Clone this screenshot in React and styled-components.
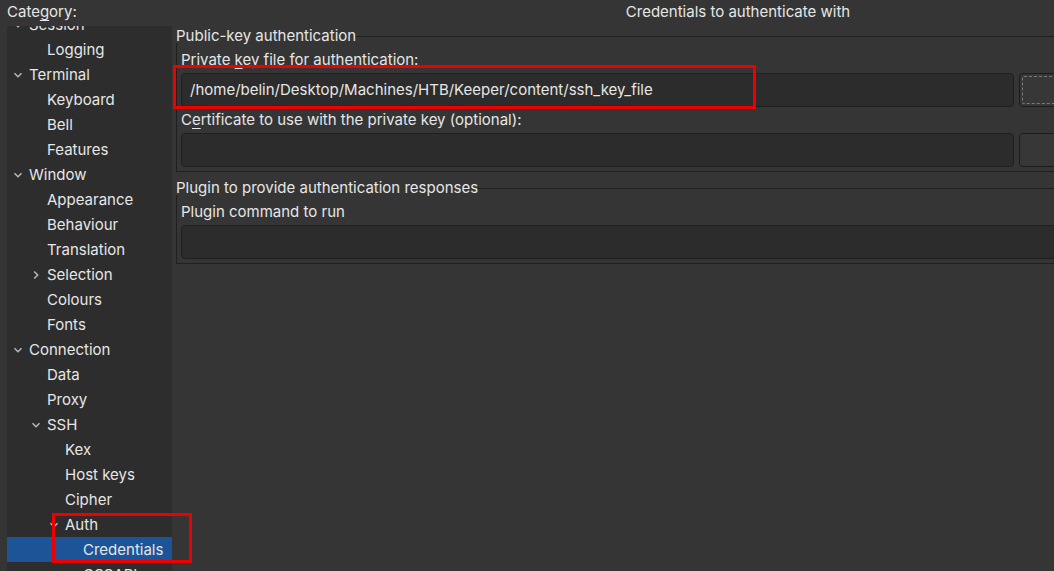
import React from 'react'
import styled, {createGlobalStyle} from 'styled-components'

const GlobalStyle = createGlobalStyle`
  html, body {
    margin: 0;
    padding: 0;
    background: #353535;
  }
  body {
    font-family: Inter, "Noto Sans", sans-serif;
    font-size: 15px;
    color: #e6e6e6;
  }
`

const tree = [
  {label: 'Session', level: 0, arrow: 'down'},
  {label: 'Logging', level: 1},
  {label: 'Terminal', level: 0, arrow: 'down'},
  {label: 'Keyboard', level: 1},
  {label: 'Bell', level: 1},
  {label: 'Features', level: 1},
  {label: 'Window', level: 0, arrow: 'down'},
  {label: 'Appearance', level: 1},
  {label: 'Behaviour', level: 1},
  {label: 'Translation', level: 1},
  {label: 'Selection', level: 1, arrow: 'right'},
  {label: 'Colours', level: 1},
  {label: 'Fonts', level: 1},
  {label: 'Connection', level: 0, arrow: 'down'},
  {label: 'Data', level: 1},
  {label: 'Proxy', level: 1},
  {label: 'SSH', level: 1, arrow: 'down'},
  {label: 'Kex', level: 2},
  {label: 'Host keys', level: 2},
  {label: 'Cipher', level: 2},
  {label: 'Auth', level: 2, arrow: 'down'},
  {label: 'Credentials', level: 3, selected: true},
  {label: 'GSSAPI', level: 3},
]

const Chevron = ({dir}) => (
  <svg width="10" height="10" viewBox="0 0 10 10">
    {dir === 'down'
      ? <path d="M1.5 3.2 L5 6.7 L8.5 3.2" fill="none" stroke="#b8b8b8" strokeWidth="1.5" />
      : <path d="M3.2 1.5 L6.7 5 L3.2 8.5" fill="none" stroke="#b8b8b8" strokeWidth="1.5" />}
  </svg>
)

const App = () => {
  return <Wrapper>
    <GlobalStyle />
    <Side>
      <Caption>Cate<Mn>g</Mn>ory:</Caption>
      <TreePanel>
        <TreeList>
          {tree.map(item => (
            <TreeRow key={item.label} level={item.level} selected={item.selected}>
              <ArrowBox>{item.arrow && <Chevron dir={item.arrow} />}</ArrowBox>
              {item.label}
            </TreeRow>
          ))}
        </TreeList>
      </TreePanel>
    </Side>

    <Main>
      <Title>Credentials to authenticate with</Title>

      <Group>
        <GroupHeader><span>Public-key authentication</span></GroupHeader>
        <GroupBody>
          <Label>Private <Mn>k</Mn>ey file for authentication:</Label>
          <FieldRow>
            <Input>/home/belin/Desktop/Machines/HTB/Keeper/content/ssh_key_file</Input>
            <Button focused />
          </FieldRow>
          <Label>C<Mn>e</Mn>rtificate to use with the private key (optional):</Label>
          <FieldRow>
            <Input />
            <Button />
          </FieldRow>
        </GroupBody>
      </Group>

      <Group>
        <GroupHeader><span>Plugin to provide authentication responses</span></GroupHeader>
        <GroupBody>
          <Label>Plugin command to run</Label>
          <FieldRow>
            <Input />
          </FieldRow>
        </GroupBody>
      </Group>
    </Main>

    <Highlight top={65} left={173} width={583} height={44} />
    <Highlight top={513} left={52} width={140} height={50} />
  </Wrapper>
}

const Wrapper = styled.div`
  position: relative;
  width: 1054px;
  height: 571px;
  overflow: hidden;
  display: flex;
  gap: 4px;
  padding-left: 7px;
  box-sizing: border-box;
  background: #353535;
`

const Side = styled.div`
  width: 165px;
  flex-shrink: 0;
  display: flex;
  flex-direction: column;
`

const Caption = styled.div`
  height: 26px;
  line-height: 24px;
`

const Mn = styled.span`
  text-decoration: underline;
  text-underline-offset: 3px;
`

const TreePanel = styled.div`
  flex: 1;
  background: #2d2d2d;
  overflow: hidden;
`

const TreeList = styled.div`
  margin-top: -14px;
`

const TreeRow = styled.div`
  height: 25px;
  display: flex;
  align-items: center;
  padding-left: ${p => 6 + p.level * 18}px;
  background: ${p => p.selected ? '#1c5497' : 'transparent'};
  white-space: nowrap;
`

const ArrowBox = styled.span`
  width: 10px;
  height: 10px;
  margin-right: 6px;
  display: flex;
`

const Main = styled.div`
  width: 1124px;
  flex-shrink: 0;
  display: flex;
  flex-direction: column;
`

const Title = styled.div`
  height: 27px;
  line-height: 24px;
  text-align: center;
`

const Group = styled.div`
  margin-bottom: 7px;
`

const GroupHeader = styled.div`
  display: flex;
  align-items: center;
  height: 16px;
  white-space: nowrap;

  &::after {
    content: '';
    flex: 1;
    border-top: 1px solid #202020;
    margin-top: 2px;
  }
`

const GroupBody = styled.div`
  border: 1px solid #202020;
  border-top: none;
  padding: 8px 4px 4px 4px;
  display: flex;
  flex-direction: column;
`

const Label = styled.div`
  height: 18px;
  line-height: 18px;
  margin-bottom: 4px;
  white-space: nowrap;
`

const FieldRow = styled.div`
  display: flex;
  gap: 5px;
  margin-bottom: 4px;
  &:last-child {
    margin-bottom: 0;
  }
`

const Input = styled.div`
  flex: 1;
  height: 34px;
  box-sizing: border-box;
  background: #2c2c2c;
  border: 1px solid #1f1f1f;
  border-radius: 4px;
  padding: 0 8px;
  line-height: 32px;
  white-space: nowrap;
`

const Button = styled.div`
  width: 276px;
  height: 34px;
  box-sizing: border-box;
  background: #373737;
  border: 1px solid #1c1c1c;
  border-radius: 4px;
  position: relative;

  &::after {
    content: '';
    display: ${p => p.focused ? 'block' : 'none'};
    position: absolute;
    inset: 2px;
    border: 1px dashed #7a7a7a;
    border-radius: 2px;
  }
`

const Highlight = styled.div`
  position: absolute;
  top: ${p => p.top}px;
  left: ${p => p.left}px;
  width: ${p => p.width}px;
  height: ${p => p.height}px;
  box-sizing: border-box;
  border: 3px solid #ee0000;
  pointer-events: none;
`

export default App
